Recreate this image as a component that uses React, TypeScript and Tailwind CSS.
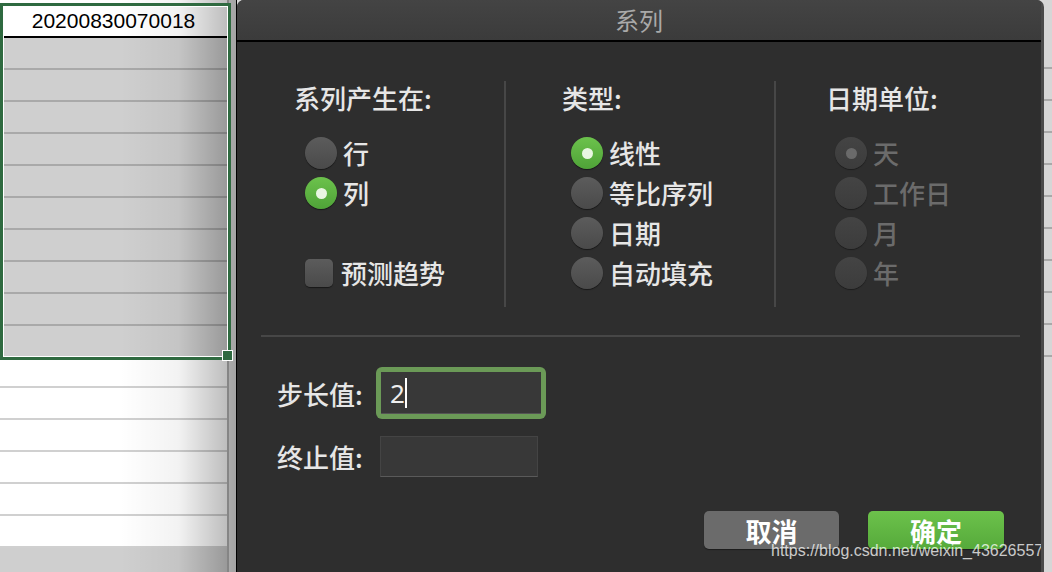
import React from 'react'

const cjk = { fontFamily: '"Noto Sans CJK SC", "Noto Sans", sans-serif' }

function Radio({ checked, disabled }: { checked?: boolean; disabled?: boolean }) {
  if (checked && !disabled) {
    return (
      <span className="w-[32px] h-[32px] shrink-0 rounded-full bg-gradient-to-b from-[#6cc24c] to-[#4fa338] flex items-center justify-center shadow-[0_1px_1px_rgba(0,0,0,0.5)]">
        <span className="w-[11px] h-[11px] rounded-full bg-[#e9f6e2]" />
      </span>
    )
  }
  if (disabled) {
    return (
      <span className="w-[32px] h-[32px] shrink-0 rounded-full bg-gradient-to-b from-[#444] to-[#3c3c3c] flex items-center justify-center shadow-[0_1px_1px_rgba(0,0,0,0.4)]">
        {checked && <span className="w-[11px] h-[11px] rounded-full bg-[#6a6a6a]" />}
      </span>
    )
  }
  return (
    <span className="w-[32px] h-[32px] shrink-0 rounded-full bg-gradient-to-b from-[#5c5c5c] to-[#4a4a4a] shadow-[0_1px_1px_rgba(0,0,0,0.5)]" />
  )
}

function Option({ label, checked, disabled }: { label: string; checked?: boolean; disabled?: boolean }) {
  return (
    <div className="h-[40px] flex items-center gap-[6px]">
      <Radio checked={checked} disabled={disabled} />
      <span className={`text-[26px] leading-none font-medium whitespace-nowrap ${disabled ? 'text-[#6b6b6b]' : 'text-[#e6e6e6]'}`}>{label}</span>
    </div>
  )
}

function Sheet() {
  const grayRows = Array.from({ length: 10 })
  const whiteRows = Array.from({ length: 6 })
  return (
    <div className="relative w-[237px] h-[572px] bg-[#e8e8e8] overflow-hidden border-r border-black shrink-0">
      <div className="flex flex-col w-[229px] h-full bg-white border-r-2 border-[#b4b4b4]">
        <div className="h-[5px] shrink-0" />
        <div
          className="h-[33px] shrink-0 border-b-2 border-black flex items-center justify-center text-[21px] text-black"
          style={{ fontFamily: '"Liberation Sans", Arial, sans-serif' }}
        >
          20200830070018
        </div>
        {grayRows.map((_, i) => (
          <div key={i} className={`shrink-0 bg-[#cfcfcf] ${i < 9 ? 'h-[32px] border-b-2 border-[#a9a9a9]' : 'h-[30px]'}`} />
        ))}
        {whiteRows.map((_, i) => (
          <div key={i} className="h-[32px] shrink-0 border-b-2 border-[#d0d0d0]" />
        ))}
        <div className="flex-1 bg-[#cfcfcf]" />
      </div>
      {/* dialog shadow */}
      <div className="absolute top-0 bottom-0 left-[120px] w-[117px] bg-gradient-to-r from-transparent via-black/5 to-black/30 pointer-events-none" />
      {/* selection */}
      <div className="absolute left-0 top-[3px] w-[231px] h-[357px] border-[3px] border-[#2f6a40]">
        <div className="w-full h-full border border-white" />
      </div>
      <div className="absolute left-[222px] top-[350px] w-[11px] h-[11px] bg-[#2f6a40] border border-white" />
    </div>
  )
}

export default function App() {
  return (
    <div className="w-[1052px] h-[572px] flex overflow-hidden bg-[#d8d8d8]" style={cjk}>
      <Sheet />

      <div className="relative w-[807px] h-full flex flex-col bg-[#2e2e2e] rounded-tl-[7px] rounded-tr-[7px] overflow-hidden shrink-0 border-r-[3px] border-[#4a4a4a]">
        <div className="h-[42px] shrink-0 bg-gradient-to-b from-[#444] to-[#3b3b3b] border-b-2 border-black flex items-center justify-center">
          <span className="text-[24px] text-[#a9a9a9]">系列</span>
        </div>

        <div className="flex flex-col px-[24px]">
          <div className="mt-[39px] h-[226px] flex">
            <div className="w-[245px] border-r-2 border-[#474747] flex flex-col">
              <div className="pl-[33px] h-[32px] flex items-center text-[26px] font-medium text-[#e6e6e6]">系列产生在:</div>
              <div className="pl-[44px] mt-[20px] flex flex-col">
                <Option label="行" />
                <Option label="列" checked />
                <div className="h-[40px]" />
                <div className="h-[40px] flex items-center gap-[8px]">
                  <span className="w-[28px] h-[28px] rounded-[5px] bg-gradient-to-b from-[#5c5c5c] to-[#4a4a4a] shadow-[0_1px_1px_rgba(0,0,0,0.5)]" />
                  <span className="text-[26px] leading-none font-medium text-[#e6e6e6]">预测趋势</span>
                </div>
              </div>
            </div>

            <div className="w-[270px] border-r-2 border-[#474747] flex flex-col">
              <div className="pl-[56px] h-[32px] flex items-center text-[26px] font-medium text-[#e6e6e6]">类型:</div>
              <div className="pl-[65px] mt-[20px] flex flex-col">
                <Option label="线性" checked />
                <Option label="等比序列" />
                <Option label="日期" />
                <Option label="自动填充" />
              </div>
            </div>

            <div className="flex-1 flex flex-col">
              <div className="pl-[50px] h-[32px] flex items-center text-[26px] font-medium text-[#e6e6e6]">日期单位:</div>
              <div className="pl-[59px] mt-[20px] flex flex-col">
                <Option label="天" checked disabled />
                <Option label="工作日" disabled />
                <Option label="月" disabled />
                <Option label="年" disabled />
              </div>
            </div>
          </div>

          <div className="mt-[28px] h-[2px] w-[759px] bg-[#474747]" />

          <div className="mt-[30px] flex items-center">
            <span className="w-[115px] pl-[16px] text-[26px] font-medium text-[#e6e6e6]">步长值:</span>
            <div className="w-[170px] h-[52px] rounded-[6px] bg-[#6b9a57] p-[5px]">
              <div className="w-full h-full bg-[#383838] border-b border-[#555] flex items-center pl-[9px]">
                <span className="text-[26px] text-[#eeeeee] leading-none" style={{ fontFamily: '"Noto Sans", sans-serif' }}>2</span>
                <span className="w-[2px] h-[30px] bg-white" />
              </div>
            </div>
          </div>

          <div className="mt-[17px] flex items-center">
            <span className="w-[119px] pl-[16px] text-[26px] font-medium text-[#e6e6e6]">终止值:</span>
            <div className="w-[158px] h-[41px] bg-[#383838] border border-[#444] border-b-[#5a5a5a]" />
          </div>

          <div className="mt-[34px] flex justify-end gap-[29px] pr-[13px]">
            <button className="w-[135px] h-[38px] rounded-[5px] bg-[#6b6b6b] text-white text-[26px] font-bold flex items-center justify-center shadow-[0_1px_1px_rgba(0,0,0,0.4)]">
              取消
            </button>
            <button className="w-[136px] h-[38px] rounded-[5px] bg-gradient-to-b from-[#6cc24b] to-[#56aa3b] text-white text-[26px] font-bold flex items-center justify-center shadow-[0_1px_1px_rgba(0,0,0,0.4)]">
              确定
            </button>
          </div>
        </div>

        <span
          className="absolute left-[534px] top-[543px] text-[16px] text-white/75 leading-none whitespace-nowrap"
          style={{ fontFamily: '"Liberation Sans", Arial, sans-serif' }}
        >
          https://blog.csdn.net/weixin_43626557
        </span>
      </div>

      <div className="flex-1 flex flex-col bg-[#d6d6d6]">
        <div className="h-[69px] border-b-2 border-[#a9a9a9]" />
        {Array.from({ length: 9 }).map((_, i) => (
          <div key={i} className="h-[32px] shrink-0 border-b-2 border-[#a9a9a9]" />
        ))}
      </div>
    </div>
  )
}
